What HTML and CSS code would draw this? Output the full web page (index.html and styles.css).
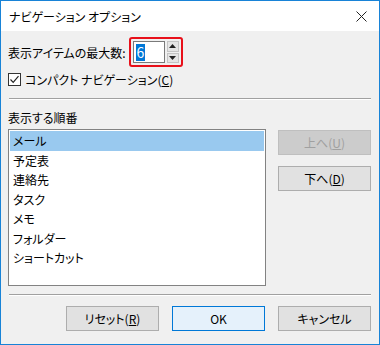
FILE: index.html
```html
<!DOCTYPE html>
<html lang="ja">
<head>
    <meta charset="UTF-8">
    <title>ナビゲーション オプション</title>
    <link rel="stylesheet" href="styles.css">
</head>
<body>
    <div class="dialog">
        <div class="dialog__title">
            <span class="dialog__caption">ナビゲーション オプション</span>
            <svg class="dialog__close" width="11" height="11" viewBox="0 0 11 11">
                <path d="M0.5 0.5 L10.5 10.5 M10.5 0.5 L0.5 10.5" stroke="#222" stroke-width="1" fill="none"/>
            </svg>
        </div>
        <div class="dialog__body">
            <div class="row row--count">
                <span>表示アイテムの最大数:</span>
                <div class="spin">
                    <div class="spin__field"><span class="spin__value">6</span></div>
                    <div class="spin__buttons">
                        <div class="spin__btn"><svg width="7" height="4" viewBox="0 0 7 4"><path d="M3.5 0 L7 4 L0 4 Z" fill="#222"/></svg></div>
                        <div class="spin__btn"><svg width="7" height="4" viewBox="0 0 7 4"><path d="M0 0 L7 0 L3.5 4 Z" fill="#222"/></svg></div>
                    </div>
                </div>
            </div>
            <label class="row row--check">
                <span class="check">
                    <svg width="11" height="11" viewBox="0 0 11 11"><path d="M1.5 5.5 L4.2 8.3 L9.5 2.2" stroke="#222" stroke-width="1.2" fill="none"/></svg>
                </span>
                <span>コンパクト ナビゲーション(<u>C</u>)</span>
            </label>
            <div class="sep sep--top"></div>
            <div class="section-label">表示する順番</div>
            <div class="order">
                <ul class="list">
                    <li class="list__item list__item--selected">メール</li>
                    <li class="list__item">予定表</li>
                    <li class="list__item">連絡先</li>
                    <li class="list__item">タスク</li>
                    <li class="list__item">メモ</li>
                    <li class="list__item">フォルダー</li>
                    <li class="list__item">ショートカット</li>
                </ul>
                <div class="order__buttons">
                    <button class="btn btn--disabled">上へ(<u>U</u>)</button>
                    <button class="btn">下へ(<u>D</u>)</button>
                </div>
            </div>
            <div class="sep sep--bottom"></div>
            <div class="footer">
                <button class="btn">リセット(<u>R</u>)</button>
                <button class="btn btn--default">OK</button>
                <button class="btn">キャンセル</button>
            </div>
        </div>
    </div>
</body>
</html>
```

FILE: styles.css
```css
body{
    margin: 0;
    font-family: "Noto Sans CJK JP", "Noto Sans", sans-serif;
    font-size: 12px;
    font-feature-settings: "palt";
    color: #000;
}

.dialog{
    width: 380px;
    height: 345px;
    box-sizing: border-box;
    border: 1px solid #1883d7;
    display: flex;
    flex-direction: column;
    background-color: #f0f0f0;
}

.dialog__title{
    height: 30px;
    background-color: #fff;
    display: flex;
    align-items: center;
    justify-content: space-between;
    padding: 0 12px 0 8px;
}

.dialog__caption{
    font-size: 12px;
}

.dialog__body{
    flex: 1;
    padding: 0 7px;
    display: flex;
    flex-direction: column;
}

.row{
    display: flex;
    align-items: center;
}

.row--count{
    margin-top: 6px;
    gap: 3px;
}

.spin{
    width: 54px;
    height: 30px;
    box-sizing: border-box;
    border: 2px solid #e8101a;
    border-radius: 3px;
    padding: 2px;
    display: flex;
    gap: 2px;
}

.spin__field{
    width: 28px;
    background-color: #fff;
    border: 1px solid #7a7a7a;
    display: flex;
    align-items: center;
    padding-left: 2px;
}

.spin__value{
    background-color: #0078d7;
    color: #fff;
    font-size: 14px;
    line-height: 17px;
    padding: 0 1px;
}

.spin__buttons{
    flex: 1;
    display: flex;
    flex-direction: column;
    gap: 1px;
}

.spin__btn{
    flex: 1;
    background-color: #e5e5e5;
    border: 1px solid #c4c4c4;
    display: flex;
    align-items: center;
    justify-content: center;
}

.row--check{
    margin-top: 4px;
    gap: 4px;
}

.check{
    width: 13px;
    height: 13px;
    box-sizing: border-box;
    border: 1px solid #333;
    background-color: #fff;
    display: flex;
    align-items: center;
    justify-content: center;
}

.sep{
    height: 1px;
    background-color: #a0a0a0;
    border-bottom: 1px solid #fff;
    margin: 0 1px;
}

.sep--top{
    margin-top: 10px;
}

.section-label{
    margin-top: 10px;
    line-height: 16px;
}

.order{
    display: flex;
    margin-top: 3px;
    gap: 12px;
}

.list{
    list-style: none;
    margin: 0;
    padding: 1px;
    width: 258px;
    height: 157px;
    box-sizing: border-box;
    border: 1px solid #828282;
    background-color: #fff;
}

.list__item{
    height: 19.5px;
    line-height: 19px;
    padding-left: 3px;
}

.list__item--selected{
    background-color: #99c9ef;
}

.order__buttons{
    display: flex;
    flex-direction: column;
    gap: 11px;
    margin-top: 1px;
}

.btn{
    width: 93px;
    height: 25px;
    padding: 0;
    font-family: inherit;
    font-size: 12px;
    font-feature-settings: "palt";
    background-color: #e1e1e1;
    border: 1px solid #adadad;
    color: #000;
}

.btn--disabled{
    background-color: #cccccc;
    border-color: #bfbfbf;
    color: #a0a0a0;
}

.btn--default{
    background-color: #e5f1fb;
    border-color: #0078d7;
}

.sep--bottom{
    margin-top: 8px;
}

.footer{
    display: flex;
    justify-content: flex-end;
    gap: 13px;
    margin-top: 10px;
    padding-right: 1px;
}
```
